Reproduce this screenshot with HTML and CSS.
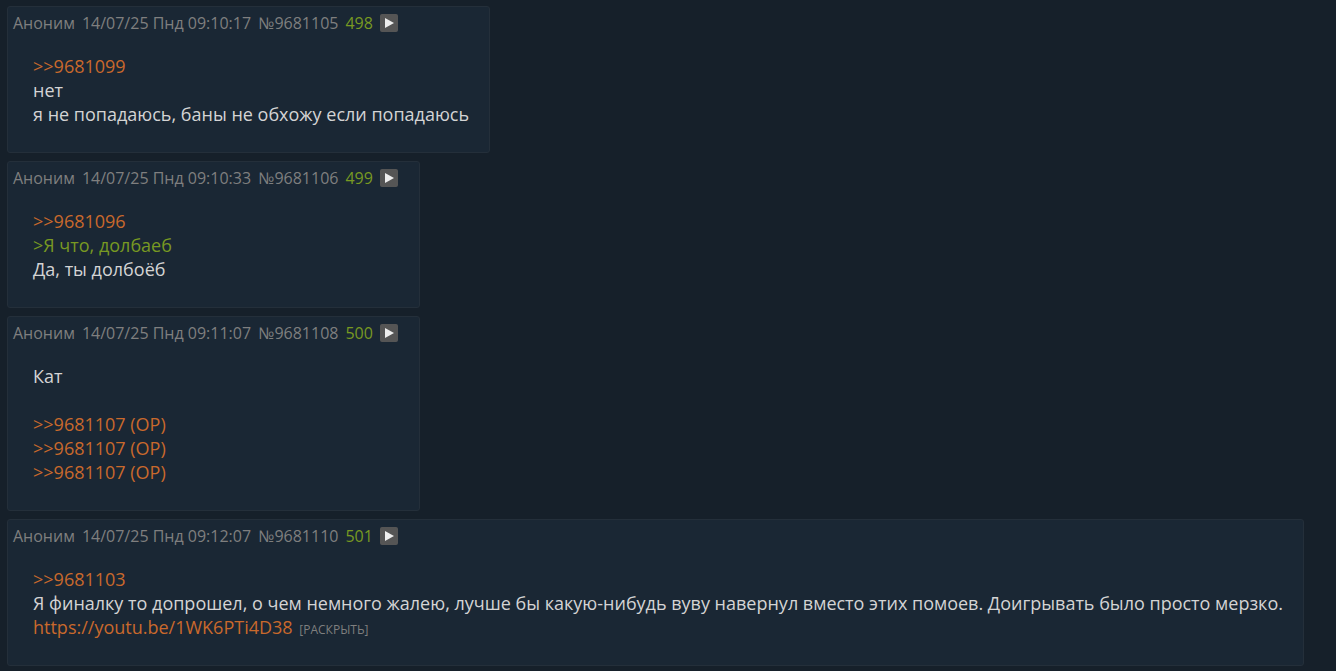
FILE: index.html
```html
<!DOCTYPE html>
<html lang="ru">
<head>
    <meta charset="UTF-8">
    <meta name="viewport" content="width=device-width, initial-scale=1.0">
    <title>Тред</title>
    <link rel="stylesheet" href="styles.css">
</head>
<body>

    <main class="thread">
        <article class="post" id="p9681105">
            <div class="post-details">
                <span class="post-name">Аноним</span>
                <time class="post-time">14/07/25 Пнд 09:10:17</time>
                <a class="post-ref" href="#p9681105">№9681105</a>
                <span class="post-number">498</span>
                <button class="post-menu" type="button" aria-label="Меню поста">
                    <svg viewBox="0 0 18 18"><path d="M5 4L14 9L5 14Z"/></svg>
                </button>
            </div>
            <div class="post-message">
                <a href="#p9681099">&gt;&gt;9681099</a><br>
                нет<br>
                я не попадаюсь, баны не обхожу если попадаюсь
            </div>
        </article>

        <article class="post" id="p9681106">
            <div class="post-details">
                <span class="post-name">Аноним</span>
                <time class="post-time">14/07/25 Пнд 09:10:33</time>
                <a class="post-ref" href="#p9681106">№9681106</a>
                <span class="post-number">499</span>
                <button class="post-menu" type="button" aria-label="Меню поста">
                    <svg viewBox="0 0 18 18"><path d="M5 4L14 9L5 14Z"/></svg>
                </button>
            </div>
            <div class="post-message">
                <a href="#p9681096">&gt;&gt;9681096</a><br>
                <span class="quote">&gt;Я что, долбаеб</span><br>
                Да, ты долбоёб
            </div>
        </article>

        <article class="post" id="p9681108">
            <div class="post-details">
                <span class="post-name">Аноним</span>
                <time class="post-time">14/07/25 Пнд 09:11:07</time>
                <a class="post-ref" href="#p9681108">№9681108</a>
                <span class="post-number">500</span>
                <button class="post-menu" type="button" aria-label="Меню поста">
                    <svg viewBox="0 0 18 18"><path d="M5 4L14 9L5 14Z"/></svg>
                </button>
            </div>
            <div class="post-message">
                Кат<br>
                <br>
                <a href="#p9681107">&gt;&gt;9681107 (OP)</a><br>
                <a href="#p9681107">&gt;&gt;9681107 (OP)</a><br>
                <a href="#p9681107">&gt;&gt;9681107 (OP)</a>
            </div>
        </article>

        <article class="post" id="p9681110">
            <div class="post-details">
                <span class="post-name">Аноним</span>
                <time class="post-time">14/07/25 Пнд 09:12:07</time>
                <a class="post-ref" href="#p9681110">№9681110</a>
                <span class="post-number">501</span>
                <button class="post-menu" type="button" aria-label="Меню поста">
                    <svg viewBox="0 0 18 18"><path d="M5 4L14 9L5 14Z"/></svg>
                </button>
            </div>
            <div class="post-message">
                <a href="#p9681103">&gt;&gt;9681103</a><br>
                Я финалку то допрошел, о чем немного жалею, лучше бы какую-нибудь вуву навернул вместо этих помоев. Доигрывать было просто мерзко.<br>
                <a href="https://youtu.be/1WK6PTi4D38">https://youtu.be/1WK6PTi4D38</a>
                <button class="expand" type="button">[РАСКРЫТЬ]</button>
            </div>
        </article>
    </main>

</body>
</html>
```

FILE: styles.css
```css
* {
    box-sizing: border-box;
}

body {
    margin: 0;
    padding: 6px 7px;
    background: #16202a;
    color: #d4d4d4;
    font-family: 'Trebuchet MS', 'Open Sans', sans-serif;
    font-size: 18px;
}

.thread {
    display: flex;
    flex-direction: column;
    align-items: flex-start;
    gap: 8px;
}

.post {
    max-width: 100%;
    background: #1a2734;
    border: 1px solid #242f3a;
    border-radius: 3px;
}

.post-details {
    display: flex;
    align-items: center;
    gap: 7px;
    height: 32px;
    padding: 0 21px 0 5px;
    color: #7f7f7f;
    font-size: 16px;
    white-space: nowrap;
}

.post-ref {
    color: inherit;
    text-decoration: none;
}

.post-number {
    color: #789922;
}

.post-menu {
    width: 18px;
    height: 18px;
    padding: 0;
    border: none;
    border-radius: 2px;
    background: #555555;
    cursor: pointer;
}

.post-menu svg {
    display: block;
    fill: #eeeeee;
}

.post-message {
    padding: 15px 20px 26px 25px;
    line-height: 24px;
}

.post-message a {
    color: #c9692c;
    text-decoration: none;
}

.post-message a:hover {
    text-decoration: underline;
}

.quote {
    color: #789922;
}

.expand {
    padding: 0 2px;
    border: none;
    background: none;
    color: #7f7f7f;
    font-family: inherit;
    font-size: 12px;
    cursor: pointer;
}
```
